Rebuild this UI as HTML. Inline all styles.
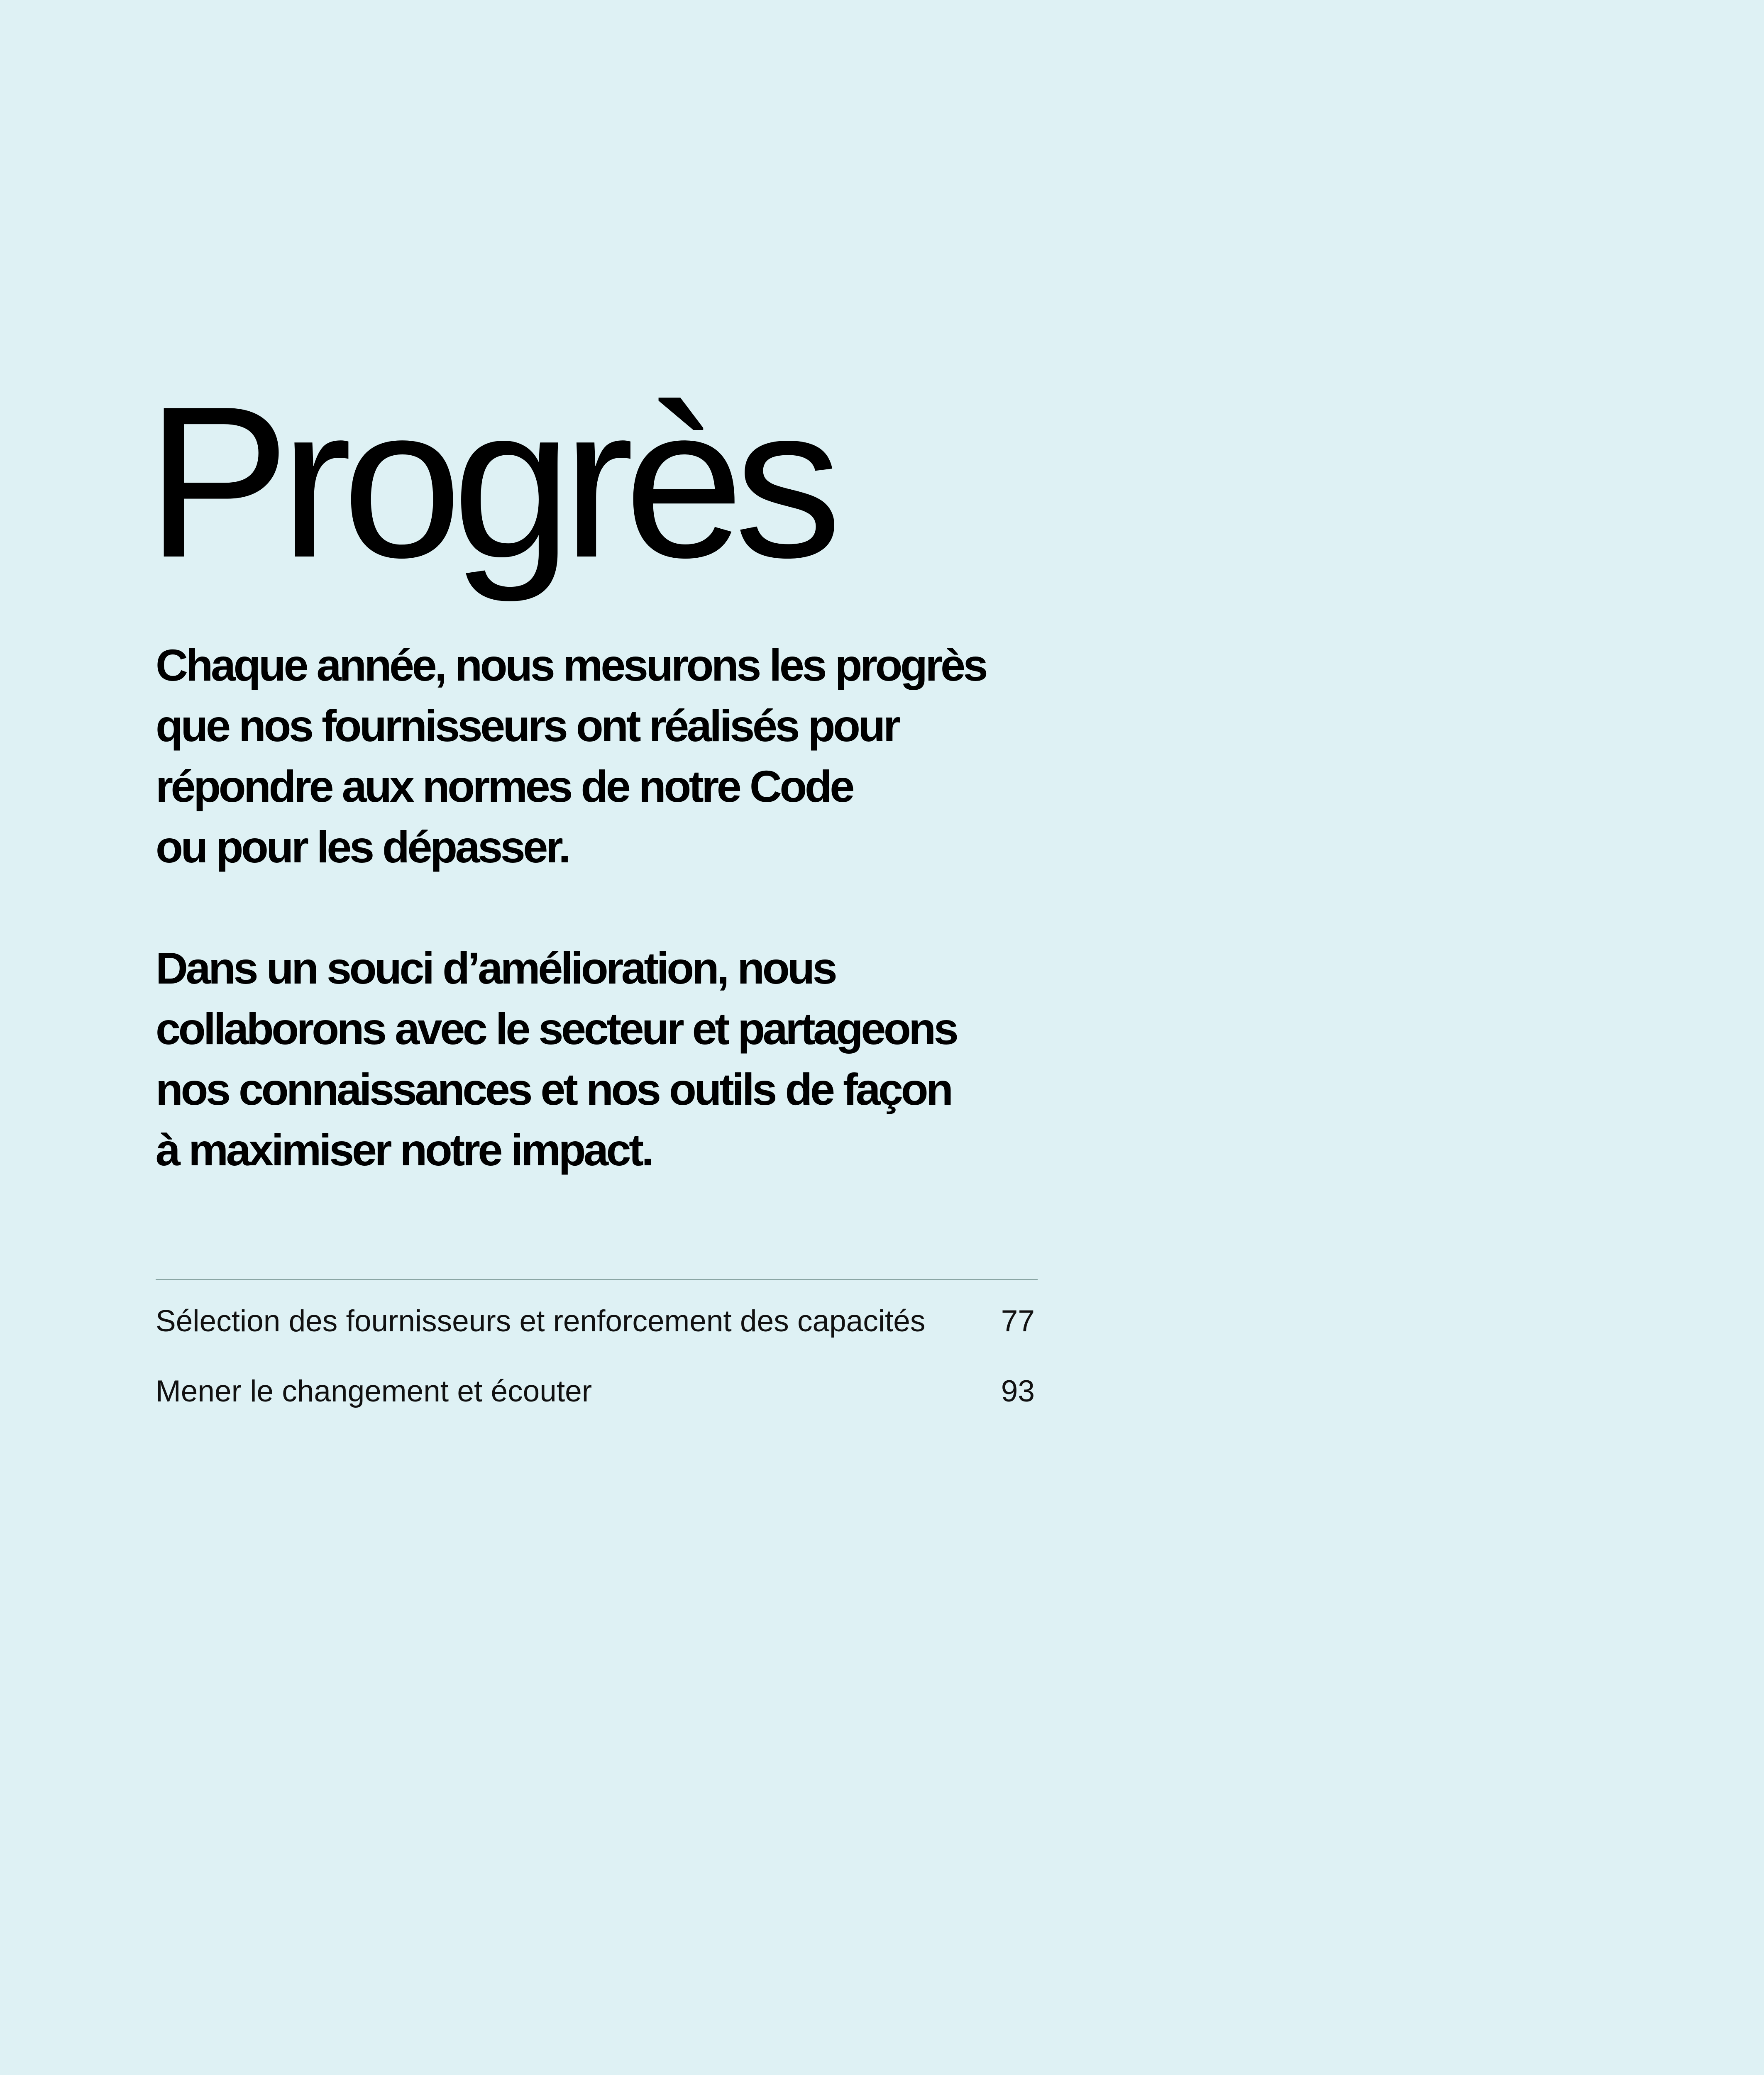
<!DOCTYPE html>
<html><head><meta charset="utf-8"><style>
html,body{margin:0;padding:0}
body{width:4250px;height:5500px;background:#def1f4;position:relative;overflow:hidden;font-family:"Liberation Sans",sans-serif;color:#000}
.t{position:absolute;left:352px;top:862px;font-size:520px;line-height:600px;letter-spacing:-24px;white-space:nowrap}
.p{position:absolute;left:375px;font-size:108px;line-height:146px;font-weight:bold;letter-spacing:-5.5px;white-space:nowrap}
.rule{position:absolute;left:375px;top:3082px;width:2125px;height:3px;background:#8aa6a4}
.toc{position:absolute;left:375px;width:2118px;font-size:73px;line-height:84px;display:flex;justify-content:space-between;white-space:nowrap;color:#111}
</style></head><body>
<div class="t">Progrès</div>
<div class="p" style="top:1530px">Chaque année, nous mesurons les progrès<br>que nos fournisseurs ont réalisés pour<br>répondre aux normes de notre Code<br>ou pour les dépasser.</div>
<div class="p" style="top:2260px">Dans un souci d’amélioration, nous<br>collaborons avec le secteur et partageons<br>nos connaissances et nos outils de façon<br>à maximiser notre impact.</div>
<div class="rule"></div>
<div class="toc" style="top:3142px"><span>Sélection des fournisseurs et renforcement des capacités</span><span>77</span></div>
<div class="toc" style="top:3311px"><span>Mener le changement et écouter</span><span>93</span></div>
</body></html>
